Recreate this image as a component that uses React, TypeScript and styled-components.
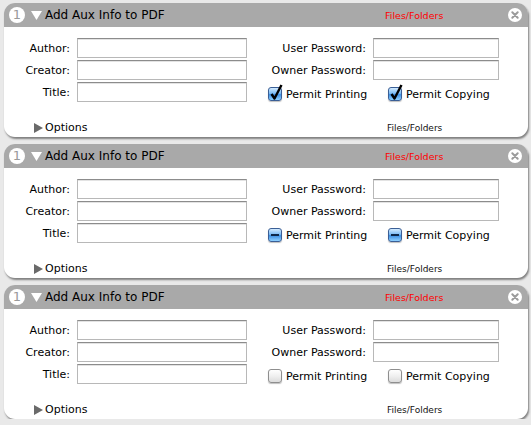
import React from "react";
import styled, { createGlobalStyle } from "styled-components";

const GlobalStyle = createGlobalStyle`
  body {
    margin: 0;
    background: #e9e9e9;
    font-family: "Lucida Grande", "DejaVu Sans", sans-serif;
    color: #000;
  }
`;

const Page = styled.div`
  display: flex;
  flex-direction: column;
  gap: 7px;
  padding: 3px 0 0 4px;
`;

const Panel = styled.section`
  width: 524px;
  height: 134px;
  background: #fff;
  border-radius: 11px;
  overflow: hidden;
  box-shadow: 1px 2px 2px rgba(0, 0, 0, 0.45);
  display: flex;
  flex-direction: column;
`;

const Header = styled.div`
  height: 24px;
  background: #a9a9a9;
  display: flex;
  align-items: center;
  padding: 0 6px 0 5px;
`;

const StepNumber = styled.span`
  width: 16px;
  height: 16px;
  border-radius: 50%;
  background: #fff;
  color: #9a9a9a;
  font-size: 13px;
  line-height: 16px;
  text-align: center;
  margin-right: 6px;
`;

const Title = styled.span`
  font-size: 12px;
  margin-left: 3px;
  width: 340px;
`;

const RedLink = styled.span`
  font-size: 9.5px;
  color: #ff0000;
  flex: 1;
`;

const Body = styled.div`
  display: grid;
  grid-template-columns: 66px 170px 112px 126px;
  grid-auto-rows: 20px;
  column-gap: 7px;
  row-gap: 2px;
  padding-top: 11px;
  align-items: center;
`;

const Label = styled.label`
  font-size: 11px;
  text-align: right;
  white-space: nowrap;
`;

const Field = styled.div`
  height: 20px;
  box-sizing: border-box;
  border: 1px solid #b8b8b8;
  border-top-color: #8c8c8c;
  box-shadow: inset 0 1px 0 #e3e3e3;
  background: #fff;
`;

const Checks = styled.div`
  grid-column: 3 / 5;
  display: grid;
  grid-template-columns: 120px auto;
  padding-left: 14px;
  margin-top: 4px;
`;

const CheckItem = styled.div`
  display: flex;
  align-items: center;
  gap: 4px;
  font-size: 11px;
  white-space: nowrap;
`;

type BoxState = "checked" | "mixed" | "off";

const Box = styled.span<{ $state: BoxState }>`
  position: relative;
  width: 14px;
  height: 14px;
  border-radius: 3px;
  box-sizing: border-box;
  border: 1px solid ${(p) => (p.$state === "off" ? "#8e8e8e" : "#3b5f96")};
  background: ${(p) =>
    p.$state === "off"
      ? "linear-gradient(#ffffff, #f0f0f0 50%, #dcdcdc)"
      : "linear-gradient(#d4ebff, #7bbaf3 45%, #3f90e3 55%, #8fd0ff)"};
  box-shadow: 0 1px 1px rgba(0, 0, 0, 0.25);
  display: flex;
  align-items: center;
  justify-content: center;
`;

const Dash = styled.span`
  width: 8px;
  height: 2px;
  background: #0f2748;
`;

const Mark = styled.svg`
  position: absolute;
  left: 1px;
  top: -4px;
`;

const Footer = styled.div`
  display: grid;
  grid-template-columns: 353px auto;
  align-items: center;
  padding-left: 30px;
  margin-top: 19px;
`;

const Disclosure = styled.div`
  display: flex;
  align-items: center;
  gap: 2px;
  font-size: 11px;
`;

const SmallText = styled.span`
  font-size: 9px;
  color: #111;
`;

const Check = ({ state, label }: { state: BoxState; label: string }) => (
  <CheckItem>
    <Box $state={state}>
      {state === "mixed" && <Dash />}
      {state === "checked" && (
        <Mark width="13" height="17" viewBox="0 0 13 17">
          <path d="M1.5 10 L4.5 14.5 L11.5 1" fill="none" stroke="#000" strokeWidth="2.4" strokeLinejoin="round" />
        </Mark>
      )}
    </Box>
    {label}
  </CheckItem>
);

const AuxPanel = ({ state }: { state: BoxState }) => (
  <Panel>
    <Header>
      <StepNumber>1</StepNumber>
      <svg width="11" height="9" viewBox="0 0 11 9">
        <path d="M0 0 H11 L5.5 9 Z" fill="#fff" />
      </svg>
      <Title>Add Aux Info to PDF</Title>
      <RedLink>Files/Folders</RedLink>
      <svg width="14" height="14" viewBox="0 0 14 14">
        <circle cx="7" cy="7" r="7" fill="#fff" />
        <path d="M4.3 4.3 L9.7 9.7 M9.7 4.3 L4.3 9.7" stroke="#9b9b9b" strokeWidth="2" strokeLinecap="round" />
      </svg>
    </Header>
    <Body>
      <Label>Author:</Label>
      <Field />
      <Label>User Password:</Label>
      <Field />
      <Label>Creator:</Label>
      <Field />
      <Label>Owner Password:</Label>
      <Field />
      <Label>Title:</Label>
      <Field />
      <Checks>
        <Check state={state} label="Permit Printing" />
        <Check state={state} label="Permit Copying" />
      </Checks>
    </Body>
    <Footer>
      <Disclosure>
        <svg width="9" height="10" viewBox="0 0 9 10">
          <path d="M0 0 L9 5 L0 10 Z" fill="#6a6a6a" />
        </svg>
        Options
      </Disclosure>
      <SmallText>Files/Folders</SmallText>
    </Footer>
  </Panel>
);

export default function App() {
  return (
    <>
      <GlobalStyle />
      <Page>
        <AuxPanel state="checked" />
        <AuxPanel state="mixed" />
        <AuxPanel state="off" />
      </Page>
    </>
  );
}
